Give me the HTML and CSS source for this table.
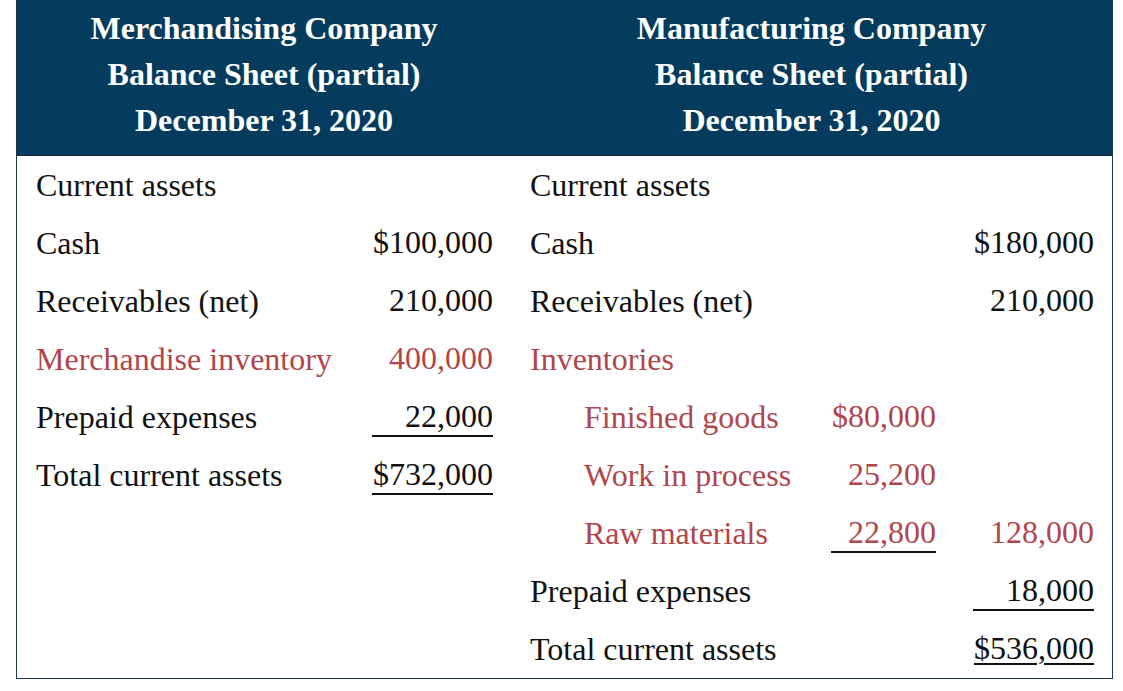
FILE: index.html
```html
<!DOCTYPE html>
<html>
<head>
<meta charset="utf-8">
<link rel="stylesheet" href="styles.css">
</head>
<body>
<div class="sheet">
  <div class="header">
    <div class="head-col left-col">
      <div>Merchandising Company</div>
      <div>Balance Sheet (partial)</div>
      <div>December 31, 2020</div>
    </div>
    <div class="head-col right-col">
      <div>Manufacturing Company</div>
      <div>Balance Sheet (partial)</div>
      <div>December 31, 2020</div>
    </div>
  </div>
  <div class="body">
    <div class="table left-table">
      <div class="row"><span class="label">Current assets</span><span class="amt"></span></div>
      <div class="row"><span class="label">Cash</span><span class="amt">$100,000</span></div>
      <div class="row"><span class="label">Receivables (net)</span><span class="amt">210,000</span></div>
      <div class="row red"><span class="label">Merchandise inventory</span><span class="amt">400,000</span></div>
      <div class="row"><span class="label">Prepaid expenses</span><span class="amt rule">22,000</span></div>
      <div class="row"><span class="label">Total current assets</span><span class="amt rule">$732,000</span></div>
    </div>
    <div class="table right-table">
      <div class="row"><span class="label">Current assets</span><span class="mid"></span><span class="amt"></span></div>
      <div class="row"><span class="label">Cash</span><span class="mid"></span><span class="amt">$180,000</span></div>
      <div class="row"><span class="label">Receivables (net)</span><span class="mid"></span><span class="amt">210,000</span></div>
      <div class="row red"><span class="label">Inventories</span><span class="mid"></span><span class="amt"></span></div>
      <div class="row red"><span class="label sub">Finished goods</span><span class="mid">$80,000</span><span class="amt"></span></div>
      <div class="row red"><span class="label sub">Work in process</span><span class="mid">25,200</span><span class="amt"></span></div>
      <div class="row red"><span class="label sub">Raw materials</span><span class="mid rule">22,800</span><span class="amt">128,000</span></div>
      <div class="row"><span class="label">Prepaid expenses</span><span class="mid"></span><span class="amt rule">18,000</span></div>
      <div class="row"><span class="label">Total current assets</span><span class="mid"></span><span class="amt"><span class="dbl">$536,000</span></span></div>
    </div>
  </div>
</div>
</body>
</html>
```
FILE: styles.css
```css
html, body {
  margin: 0;
  padding: 0;
  background: #ffffff;
}
body {
  font-family: "Liberation Serif", "Times New Roman", serif;
  font-size: 32px;
  color: #111111;
}
.sheet {
  margin-left: 16px;
  width: 1097px;
  box-sizing: border-box;
  border: 1px solid #1d3a4b;
  border-top: none;
}
.header {
  display: grid;
  grid-template-columns: 494px 1fr;
  background: #053c5d;
  color: #ffffff;
  font-weight: bold;
  border-bottom: 1px solid #14293a;
  padding: 5px 0 12px;
  line-height: 46px;
  text-align: center;
}
.body {
  display: grid;
  grid-template-columns: 494px 1fr;
}
.table {
  display: flex;
  flex-direction: column;
}
.left-table {
  padding: 0 18px 0 19px;
}
.right-table {
  padding: 0 18px 0 19px;
}
.row {
  height: 58px;
  display: flex;
  align-items: center;
}
.row.red {
  color: #b0464b;
}
.label {
  flex: 1;
  white-space: nowrap;
}
.label.sub {
  padding-left: 54px;
}
.amt {
  width: 121px;
  text-align: right;
  line-height: 37px;
  min-height: 37px;
  border-bottom: 2px solid transparent;
}
.mid {
  width: 105px;
  margin-right: 37px;
  text-align: right;
  line-height: 37px;
  min-height: 37px;
  border-bottom: 2px solid transparent;
}
.rule {
  border-bottom-color: #111111;
}
.dbl {
  text-decoration: underline;
  text-decoration-thickness: 2px;
  text-underline-offset: 4px;
}
```
